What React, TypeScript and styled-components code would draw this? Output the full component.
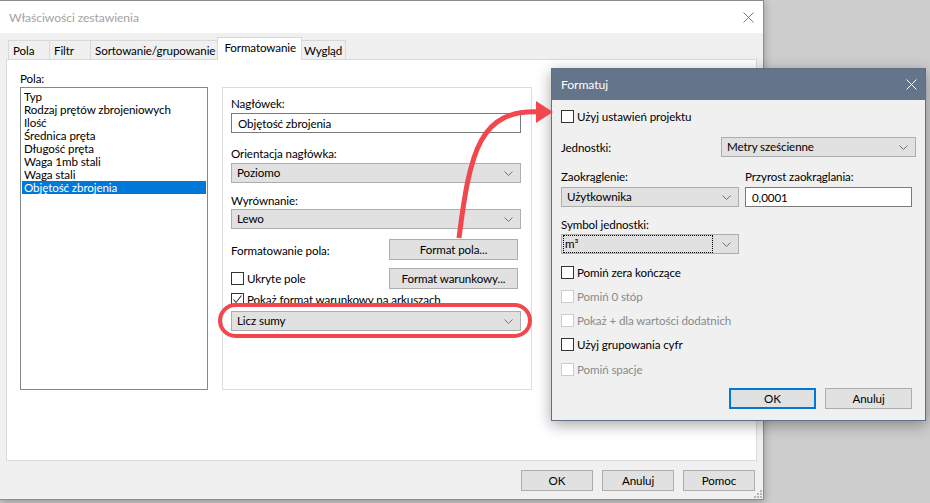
import React from "react";
import styled, { createGlobalStyle, css } from "styled-components";

const GlobalStyle = createGlobalStyle`
  html, body { margin: 0; padding: 0; }
  body {
    width: 930px;
    height: 503px;
    overflow: hidden;
    background: #cdcdcd;
    font-family: Lato, "Noto Sans", sans-serif;
    font-size: 11.6px;
    letter-spacing: -0.1px;
    color: #000;
  }
  * { box-sizing: border-box; }
`;

const Desktop = styled.div`
  position: relative;
  width: 930px;
  height: 503px;
  background: #cdcdcd;
  overflow: hidden;
`;

/* ---------- main window ---------- */

const Window = styled.div`
  position: absolute;
  left: 0;
  top: 0;
  width: 764px;
  height: 500px;
  background: #f0f0f0;
  border: 1px solid #8c8c8c;
  border-left: none;
  box-shadow: 0 2px 8px rgba(0, 0, 0, 0.28);
  display: flex;
  flex-direction: column;
`;

const TitleBar = styled.div`
  height: 32px;
  flex: none;
  background: #fff;
  display: flex;
  align-items: center;
  justify-content: space-between;
  padding: 0 9px 0 9px;
  color: #a3a3a3;
  font-size: 12.2px;
`;

const CloseX = styled.svg<{ $light?: boolean }>`
  width: 11px;
  height: 11px;
  stroke: ${(p) => (p.$light ? "#fff" : "#7a7a7a")};
  stroke-width: 1;
`;

const WindowBody = styled.div`
  flex: 1;
  display: flex;
  flex-direction: column;
  padding: 4px 6px 0 6px;
`;

const TabStrip = styled.div`
  height: 22px;
  display: flex;
  align-items: flex-end;
  padding-left: 3px;
  position: relative;
  z-index: 1;
`;

const Tab = styled.div<{ $active?: boolean }>`
  height: 19px;
  min-width: 42px;
  padding: 0 3px 0 4px;
  margin-left: -1px;
  border: 1px solid #d9d9d9;
  border-bottom: none;
  background: #f0f0f0;
  display: flex;
  align-items: center;
  white-space: nowrap;
  ${(p) =>
    p.$active &&
    css`
      height: 23px;
      margin: 0 -2px -1px -2px;
      padding: 0 5px 3px 6px;
      background: #fff;
      position: relative;
      z-index: 2;
    `}
`;

const TabPanel = styled.div`
  height: 402px;
  background: #fff;
  border: 1px solid #d9d9d9;
  display: flex;
  gap: 14px;
  padding: 11px 14px 0 13px;
`;

const Footer = styled.div`
  flex: 1;
  display: flex;
  justify-content: flex-end;
  align-items: flex-start;
  gap: 9px;
  padding: 9px 2px 0 0;
  position: relative;
`;

const Grip = styled.svg`
  position: absolute;
  right: -6px;
  bottom: 0px;
  width: 9px;
  height: 9px;
  fill: #b5b5b5;
`;

/* ---------- shared controls ---------- */

const Button = styled.div<{ $w: number; $default?: boolean }>`
  width: ${(p) => p.$w}px;
  height: 21px;
  background: #e1e1e1;
  border: 1px solid #adadad;
  display: flex;
  align-items: center;
  justify-content: center;
  white-space: nowrap;
  ${(p) =>
    p.$default &&
    css`
      border-color: #0078d7;
      box-shadow: inset 0 0 0 1px #0078d7;
    `}
`;

const SelectBox = styled.div<{ $w?: number }>`
  width: ${(p) => (p.$w ? `${p.$w}px` : "100%")};
  height: 20px;
  background: #e1e1e1;
  border: 1px solid #adadad;
  display: flex;
  align-items: center;
  padding: 0 7px 0 2px;
`;

const SelectText = styled.span<{ $focus?: boolean }>`
  flex: 1;
  height: 16px;
  line-height: 16px;
  padding-left: 3px;
  white-space: nowrap;
  ${(p) =>
    p.$focus &&
    css`
      outline: 1px dotted #000;
      outline-offset: 0;
      margin-right: 10px;
      padding-left: 1px;
    `}
`;

const Chevron = () => (
  <svg width="9" height="5" viewBox="0 0 9 5" style={{ flex: "none" }}>
    <polyline points="0.5,0.5 4.5,4.5 8.5,0.5" fill="none" stroke="#707070" strokeWidth="1" />
  </svg>
);

const Select = ({ value, width, focus }: { value: string; width?: number; focus?: boolean }) => (
  <SelectBox $w={width}>
    <SelectText $focus={focus}>{value}</SelectText>
    <Chevron />
  </SelectBox>
);

const TextInput = styled.div<{ $w?: number }>`
  width: ${(p) => (p.$w ? `${p.$w}px` : "100%")};
  height: 20px;
  background: #fff;
  border: 1px solid #7a7a7a;
  display: flex;
  align-items: center;
  padding-left: 6px;
`;

const Label = styled.div<{ $mt?: number }>`
  height: 16px;
  line-height: 16px;
  margin-top: ${(p) => p.$mt ?? 0}px;
  white-space: nowrap;
`;

const CheckRow = styled.div<{ $mt?: number; $disabled?: boolean }>`
  height: 16px;
  display: flex;
  align-items: center;
  gap: 3px;
  margin-top: ${(p) => p.$mt ?? 0}px;
  white-space: nowrap;
  color: ${(p) => (p.$disabled ? "#8a8a8a" : "#000")};
`;

const Box = styled.span<{ $disabled?: boolean }>`
  width: 13px;
  height: 13px;
  flex: none;
  background: #fff;
  border: 1px solid ${(p) => (p.$disabled ? "#cccccc" : "#333")};
  display: flex;
  align-items: center;
  justify-content: center;
`;

const Check = ({
  label,
  checked,
  disabled,
  mt,
}: {
  label: string;
  checked?: boolean;
  disabled?: boolean;
  mt?: number;
}) => (
  <CheckRow $mt={mt} $disabled={disabled}>
    <Box $disabled={disabled}>
      {checked && (
        <svg width="11" height="11" viewBox="0 0 11 11">
          <polyline points="1.5,5.5 4,8.5 9.5,1.5" fill="none" stroke="#333" strokeWidth="1.1" />
        </svg>
      )}
    </Box>
    {label}
  </CheckRow>
);

/* ---------- Formatowanie tab ---------- */

const LeftCol = styled.div`
  width: 188px;
  flex: none;
  display: flex;
  flex-direction: column;
`;

const ListBox = styled.div`
  height: 303px;
  border: 1px solid #828790;
  padding: 2px 1px;
`;

const ListItem = styled.div<{ $selected?: boolean }>`
  height: 13px;
  line-height: 13px;
  padding-left: 2px;
  white-space: nowrap;
  ${(p) =>
    p.$selected &&
    css`
      background: #0078d7;
      color: #fff;
    `}
`;

const GroupBox = styled.div`
  width: 310px;
  height: 303px;
  margin-top: 16px;
  border: 1px solid #dcdcdc;
  padding: 7px 10px 0 8px;
  display: flex;
  flex-direction: column;
`;

const FieldGap = styled.div<{ $h: number }>`
  height: ${(p) => p.$h}px;
  flex: none;
`;

const ActionRow = styled.div<{ $mt: number }>`
  display: flex;
  align-items: center;
  justify-content: space-between;
  padding-right: 3px;
  margin-top: ${(p) => p.$mt}px;
`;

/* ---------- Formatuj dialog ---------- */

const Dialog = styled.div`
  position: absolute;
  left: 551px;
  top: 68px;
  width: 375px;
  height: 353px;
  background: #f0f0f0;
  border: 1px solid #5f6f85;
  box-shadow: 0 4px 14px rgba(0, 0, 0, 0.35);
  display: flex;
  flex-direction: column;
  z-index: 5;
`;

const DialogTitle = styled.div`
  height: 31px;
  flex: none;
  background: #647589;
  color: #fff;
  display: flex;
  align-items: center;
  justify-content: space-between;
  padding: 0 8px 0 9px;
  font-size: 12.2px;
`;

const DialogBody = styled.div`
  flex: 1;
  display: flex;
  flex-direction: column;
  padding: 0 9px 0 9px;
`;

const UnitRow = styled.div`
  margin-top: 13px;
  display: flex;
  align-items: center;
  justify-content: space-between;
`;

const TwoCols = styled.div`
  margin-top: 12px;
  display: flex;
  gap: 6px;
`;

const Col = styled.div<{ $w: number }>`
  width: ${(p) => p.$w}px;
  display: flex;
  flex-direction: column;
`;

const DialogButtons = styled.div`
  margin-top: 11px;
  display: flex;
  justify-content: flex-end;
  gap: 9px;
  padding-right: 4px;
`;

/* ---------- annotation overlay ---------- */

const Overlay = styled.svg`
  position: absolute;
  left: 0;
  top: 0;
  width: 930px;
  height: 503px;
  pointer-events: none;
  z-index: 10;
`;

const fields = [
  "Typ",
  "Rodzaj prętów zbrojeniowych",
  "Ilość",
  "Średnica pręta",
  "Długość pręta",
  "Waga 1mb stali",
  "Waga stali",
  "Objętość zbrojenia",
];

const tabs = ["Pola", "Filtr", "Sortowanie/grupowanie", "Formatowanie", "Wygląd"];

const X = ({ light }: { light?: boolean }) => (
  <CloseX $light={light} viewBox="0 0 11 11">
    <line x1="0.5" y1="0.5" x2="10.5" y2="10.5" />
    <line x1="10.5" y1="0.5" x2="0.5" y2="10.5" />
  </CloseX>
);

export default function App() {
  return (
    <>
      <GlobalStyle />
      <Desktop>
        <Window>
          <TitleBar>
            <span>Właściwości zestawienia</span>
            <X />
          </TitleBar>
          <WindowBody>
            <TabStrip>
              {tabs.map((t) => (
                <Tab key={t} $active={t === "Formatowanie"}>
                  {t}
                </Tab>
              ))}
            </TabStrip>
            <TabPanel>
              <LeftCol>
                <Label>Pola:</Label>
                <ListBox>
                  {fields.map((f) => (
                    <ListItem key={f} $selected={f === "Objętość zbrojenia"}>
                      {f}
                    </ListItem>
                  ))}
                </ListBox>
              </LeftCol>
              <GroupBox>
                <Label $mt={1}>Nagłówek:</Label>
                <FieldGap $h={1} />
                <TextInput>Objętość zbrojenia</TextInput>
                <Label $mt={13}>Orientacja nagłówka:</Label>
                <FieldGap $h={1} />
                <Select value="Poziomo" />
                <Label $mt={10}>Wyrównanie:</Label>
                <Select value="Lewo" />
                <ActionRow $mt={10}>
                  <Label $mt={2}>Formatowanie pola:</Label>
                  <Button $w={129}>Format pola...</Button>
                </ActionRow>
                <ActionRow $mt={8}>
                  <Check label="Ukryte pole" />
                  <Button $w={129}>Format warunkowy...</Button>
                </ActionRow>
                <Check label="Pokaż format warunkowy na arkuszach" checked mt={2} />
                <FieldGap $h={4} />
                <Select value="Licz sumy" />
              </GroupBox>
            </TabPanel>
            <Footer>
              <Button $w={72}>OK</Button>
              <Button $w={72}>Anuluj</Button>
              <Button $w={72}>Pomoc</Button>
              <Grip viewBox="0 0 9 9">
                <rect x="6" y="0" width="2" height="2" />
                <rect x="3" y="3" width="2" height="2" />
                <rect x="6" y="3" width="2" height="2" />
                <rect x="0" y="6" width="2" height="2" />
                <rect x="3" y="6" width="2" height="2" />
                <rect x="6" y="6" width="2" height="2" />
              </Grip>
            </Footer>
          </WindowBody>
        </Window>

        <Dialog>
          <DialogTitle>
            <span>Formatuj</span>
            <X light />
          </DialogTitle>
          <DialogBody>
            <Check label="Użyj ustawień projektu" mt={8} />
            <UnitRow>
              <span>Jednostki:</span>
              <Select value="Metry sześcienne" width={195} />
            </UnitRow>
            <TwoCols>
              <Col $w={178}>
                <Label>Zaokrąglenie:</Label>
                <FieldGap $h={2} />
                <Select value="Użytkownika" />
              </Col>
              <Col $w={167}>
                <Label>Przyrost zaokrąglania:</Label>
                <FieldGap $h={2} />
                <TextInput>0,0001</TextInput>
              </Col>
            </TwoCols>
            <Label $mt={10}>Symbol jednostki:</Label>
            <FieldGap $h={1} />
            <Select value="m³" width={178} focus />
            <Check label="Pomiń zera kończące" mt={10} />
            <Check label="Pomiń 0 stóp" disabled mt={8} />
            <Check label="Pokaż + dla wartości dodatnich" disabled mt={8} />
            <Check label="Użyj grupowania cyfr" mt={8} />
            <Check label="Pomiń spacje" disabled mt={9} />
            <DialogButtons>
              <Button $w={87} $default>
                OK
              </Button>
              <Button $w={87}>Anuluj</Button>
            </DialogButtons>
          </DialogBody>
        </Dialog>

        <Overlay viewBox="0 0 930 503">
          <rect x="220" y="305" width="310" height="31" rx="15.5" fill="none" stroke="#f2474e" strokeWidth="4" />
          <path d="M459 238 C 470 150, 480 109, 540 112" fill="none" stroke="#f2474e" strokeWidth="5" />
          <polygon points="536,101 553,112 536,123" fill="#f2474e" />
        </Overlay>
      </Desktop>
    </>
  );
}
